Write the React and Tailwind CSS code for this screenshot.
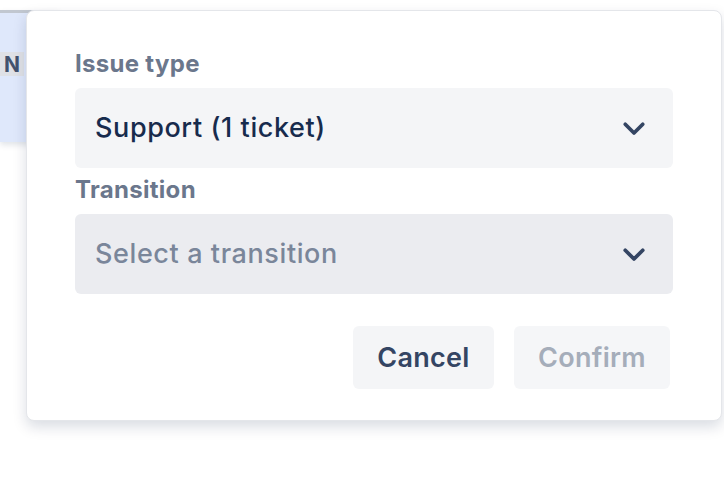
import React from "react";

function Chevron() {
  return (
    <svg width="30" height="30" viewBox="0 0 24 24" fill="none" stroke="#344563" strokeWidth="3" strokeLinecap="round" strokeLinejoin="round">
      <path d="M5 9l7 7 7-7" />
    </svg>
  );
}

export default function App() {
  return (
    <div className="relative w-[724px] h-[488px] bg-white overflow-hidden" style={{ fontFamily: "Inter, 'Noto Sans', sans-serif" }}>
      {/* background table fragment */}
      <div className="absolute left-0 top-[10px] w-[60px] h-[132px] border-t-[3px] border-[#c1c7d0] bg-[#dfe8fb] shadow-[0_3px_6px_rgba(9,30,66,0.12)]">
        <div className="mt-[39px] w-[24px] h-[24px] bg-[#dfe1e6] flex items-center justify-end pr-[4px]">
          <span className="text-[21px] font-bold text-[#42526e] leading-none">N</span>
        </div>
      </div>

      {/* popover */}
      <div className="absolute left-[26px] top-[10px] w-[696px] rounded-lg border border-[#e4e6ea] bg-white shadow-[0_6px_14px_rgba(9,30,66,0.15)] px-12 pt-[37px] pb-[31px]">
        <div className="text-[24px] leading-[32px] tracking-[0.3px] font-bold text-[#6b778c]">Issue type</div>
        <div className="mt-[8px] h-[80px] rounded-md bg-[#f4f5f7] flex items-center justify-between pl-[20px] pr-[24px]">
          <span className="text-[27px] tracking-[0.6px] font-medium text-[#172b4d]">Support (1 ticket)</span>
          <Chevron />
        </div>
        <div className="mt-[6px] text-[24px] leading-[32px] tracking-[0.3px] font-bold text-[#6b778c]">Transition</div>
        <div className="mt-[8px] h-[80px] rounded-md bg-[#ebecf0] flex items-center justify-between pl-[20px] pr-[24px]">
          <span className="text-[27px] tracking-[0.6px] font-medium text-[#7a869a]">Select a transition</span>
          <Chevron />
        </div>
        <div className="mt-[32px] flex justify-end gap-5 pr-[3px]">
          <button className="h-[63px] w-[141px] rounded-md bg-[#f4f5f7] pt-[2px] text-[27px] tracking-[0.3px] font-semibold text-[#344563]">Cancel</button>
          <button className="h-[63px] w-[156px] rounded-md bg-[#f5f6f8] pt-[2px] text-[27px] tracking-[0.3px] font-semibold text-[#a5adba]">Confirm</button>
        </div>
      </div>
    </div>
  );
}
